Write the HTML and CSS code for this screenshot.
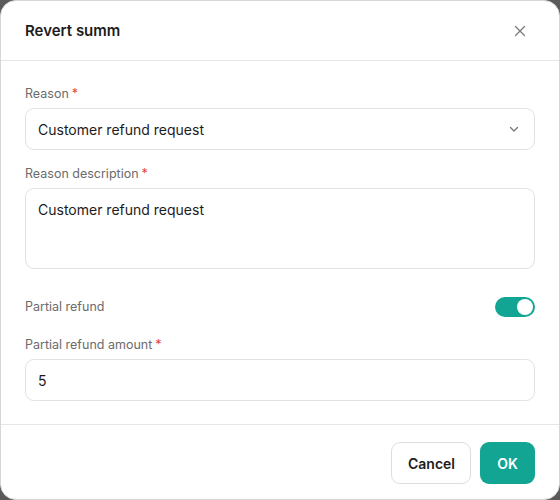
FILE: index.html
```html
<!DOCTYPE html>
<html>
<head>
<meta charset="utf-8">
<link rel="stylesheet" href="styles.css">
</head>
<body>
<div class="dialog">
  <div class="header">
    <div class="title">Revert summ</div>
    <button class="close" aria-label="Close">
      <svg width="12" height="12" viewBox="0 0 12 12"><path d="M1.5 1.5L10.5 10.5M10.5 1.5L1.5 10.5" stroke="#7a7a7a" stroke-width="1.3" stroke-linecap="round"/></svg>
    </button>
  </div>
  <div class="body">
    <div class="field">
      <div class="label">Reason<span class="req">*</span></div>
      <div class="input select">
        <span>Customer refund request</span>
        <svg width="12" height="12" viewBox="0 0 12 12"><path d="M2.5 4.5L6 8L9.5 4.5" fill="none" stroke="#777" stroke-width="1.3" stroke-linecap="round" stroke-linejoin="round"/></svg>
      </div>
    </div>
    <div class="field">
      <div class="label">Reason description<span class="req">*</span></div>
      <div class="input textarea">Customer refund request</div>
    </div>
    <div class="toggle-row">
      <div class="label plain">Partial refund</div>
      <div class="switch"><div class="knob"></div></div>
    </div>
    <div class="field last">
      <div class="label">Partial refund amount<span class="req">*</span></div>
      <div class="input">5</div>
    </div>
  </div>
  <div class="footer">
    <button class="btn cancel">Cancel</button>
    <button class="btn ok">OK</button>
  </div>
</div>
</body>
</html>
```
FILE: styles.css
```css
* { box-sizing: border-box; }
html, body { margin: 0; padding: 0; }
body {
  background: #5a5a5a;
  font-family: Inter, "Noto Sans", sans-serif;
  width: 560px;
  height: 500px;
}
.dialog {
  width: 560px;
  height: 500px;
  background: #fff;
  border: 1px solid #d6d6d6;
  border-radius: 16px;
  display: flex;
  flex-direction: column;
}
.header {
  height: 60px;
  flex: none;
  border-bottom: 1px solid #e6e6e6;
  display: flex;
  align-items: center;
  justify-content: space-between;
  padding: 0 24px 0 24px;
}
.title {
  font-size: 15px;
  font-weight: 600;
  color: #1c1c1c;
}
.close {
  border: 0;
  background: none;
  padding: 0;
  width: 12px;
  height: 12px;
  display: flex;
  margin-right: 9px;
}
.body {
  padding: 24px 24px 0 24px;
  flex: 1;
  border-bottom: 1px solid #e6e6e6;
}
.field { margin-bottom: 15px; }
.field.last { margin-bottom: 0; }
.label {
  font-size: 12.5px;
  color: #6b6b6b;
  line-height: 18px;
  margin-bottom: 5px;
}
.label.plain { margin-bottom: 0; }
.req { color: #e0443e; margin-left: 3px; }
.input {
  border: 1px solid #e2e2e2;
  border-radius: 9px;
  height: 42px;
  padding: 0 12px;
  display: flex;
  align-items: center;
  font-size: 14px;
  color: #1c1c1c;
}
.select { justify-content: space-between; padding-right: 14px; }
.textarea {
  height: 81px;
  align-items: flex-start;
  padding-top: 12px;
}
.toggle-row {
  display: flex;
  justify-content: space-between;
  align-items: center;
  margin-top: 28px;
  margin-bottom: 19px;
  height: 20px;
}
.switch {
  width: 40px;
  height: 20px;
  border-radius: 10px;
  background: #12a594;
  position: relative;
}
.knob {
  position: absolute;
  right: 2px;
  top: 2px;
  width: 16px;
  height: 16px;
  border-radius: 50%;
  background: #fff;
}
.footer {
  height: 74px;
  flex: none;
  display: flex;
  justify-content: flex-end;
  align-items: flex-start;
  gap: 9px;
  padding: 17px 24px 0 24px;
}
.btn {
  height: 42px;
  border-radius: 9px;
  font-family: Inter, "Noto Sans", sans-serif;
  font-size: 14px;
  font-weight: 600;
  padding: 0 16px;
}
.cancel {
  background: #fff;
  border: 1px solid #dedede;
  color: #1c1c1c;
  width: 80px;
}
.ok {
  background: #12a594;
  border: 0;
  color: #fff;
  width: 55px;
}
```
